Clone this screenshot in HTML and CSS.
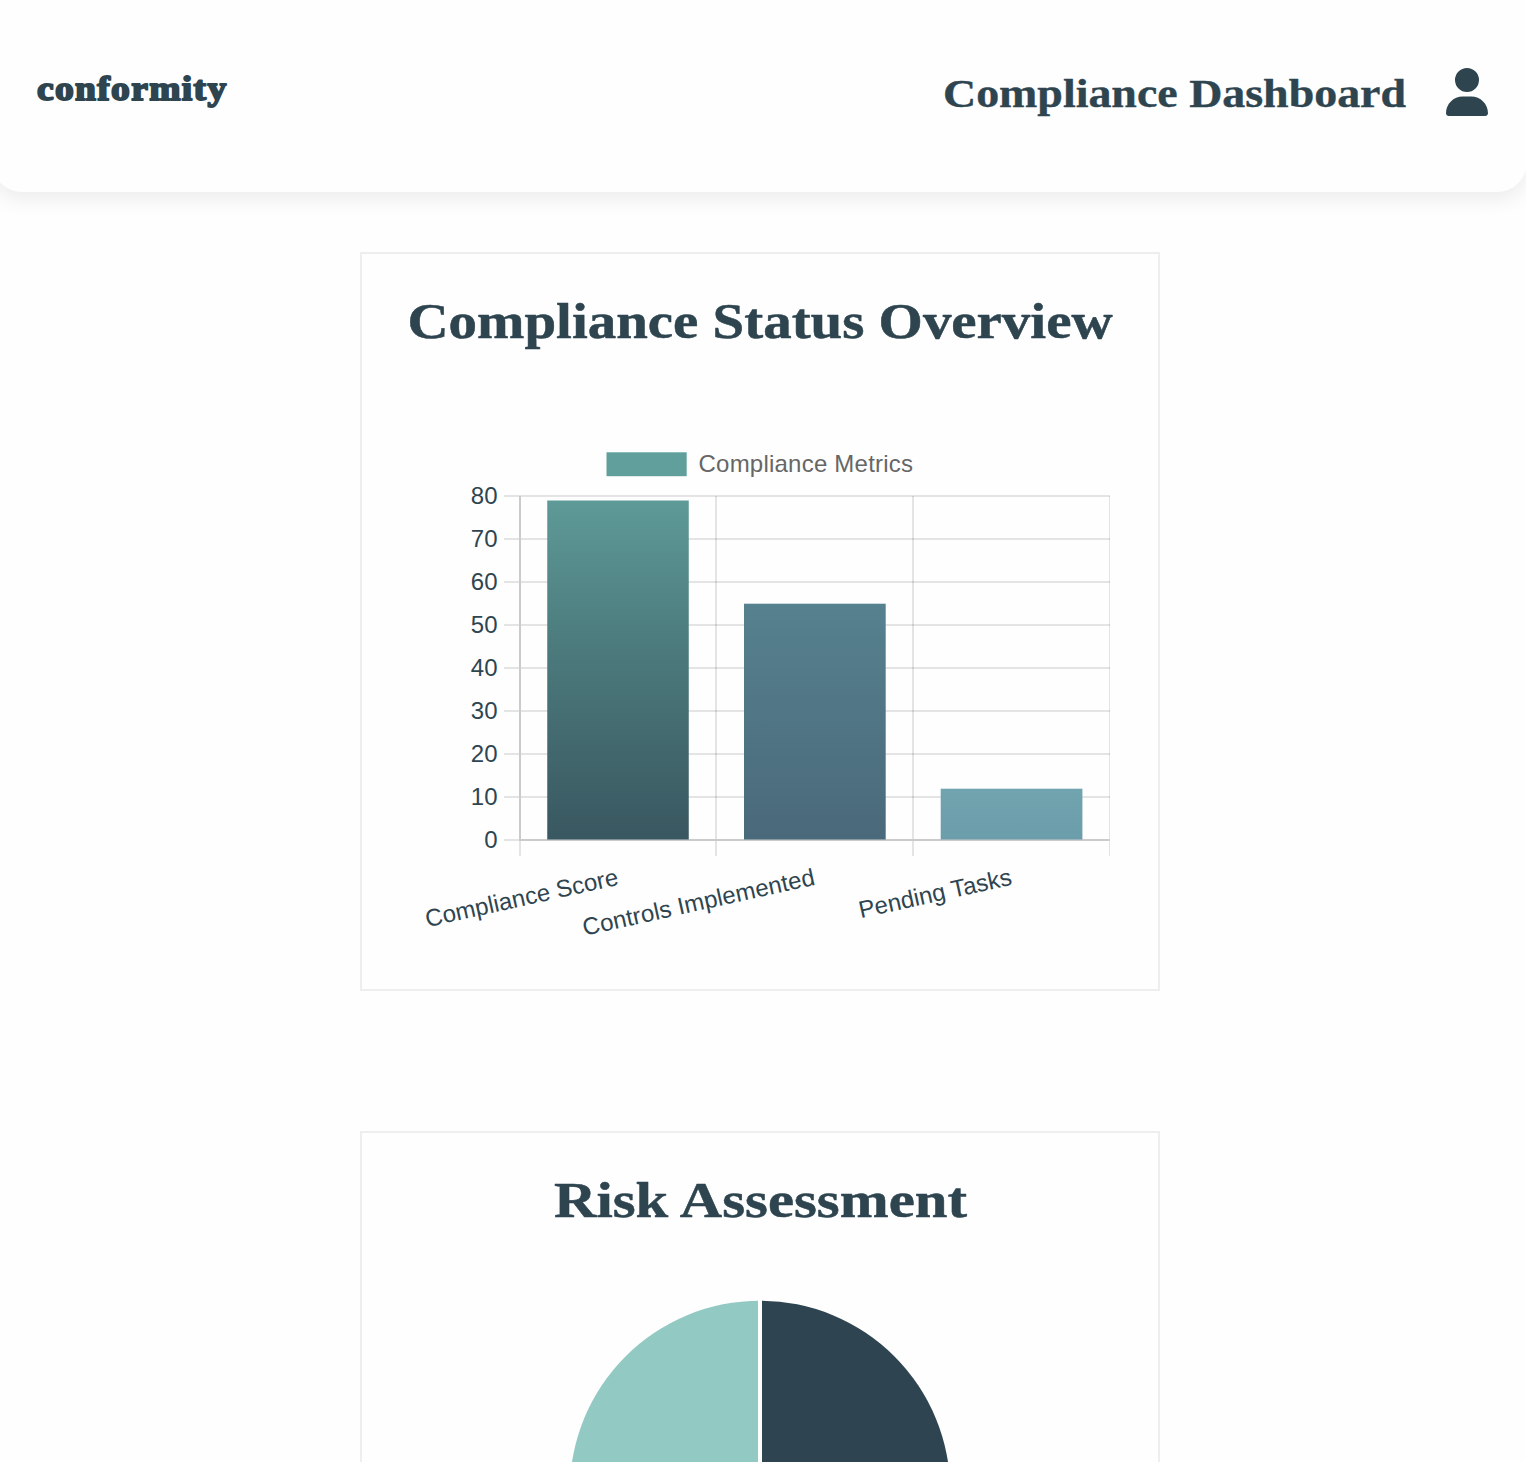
FILE: index.html
```html
<!DOCTYPE html>
<html lang="en">
<head>
<meta charset="utf-8">
<title>Compliance Dashboard</title>
<link rel="stylesheet" href="styles.css">
</head>
<body>
<header class="topbar">
  <svg class="logo" width="200" height="48" viewBox="0 0 200 48" role="img" aria-label="conformity">
    <text class="logo-text" transform="translate(2 32) scale(1.140 1)" textLength="166">conformity</text>
  </svg>
  <div class="topbar-right">
    <h1 class="page-title">
      <svg width="464" height="56" viewBox="0 0 464 56">
        <text class="title-text" x="0" y="42.500" textLength="463" lengthAdjust="spacingAndGlyphs">Compliance Dashboard</text>
      </svg>
    </h1>
    <svg class="user-icon" width="42" height="48" viewBox="0 0 448 512" aria-label="Account">
      <path d="M224 256A128 128 0 1 0 224 0a128 128 0 1 0 0 256zm-45.700 48C79.800 304 0 383.800 0 482.300C0 498.700 13.300 512 29.700 512H418.300c16.400 0 29.700-13.300 29.700-29.700C448 383.800 368.200 304 269.700 304H178.300z"/>
    </svg>
  </div>
</header>
<main class="content">
  <section class="card">
    <h2 class="card-title">
      <svg width="708" height="64" viewBox="0 0 708 64">
        <text class="heading-text" x="1.500" y="48" textLength="705" lengthAdjust="spacingAndGlyphs">Compliance Status Overview</text>
      </svg>
    </h2>
    <svg class="bar-chart" width="700" height="500" viewBox="410 440 700 500">
      <defs>
        <linearGradient id="score" x1="0" y1="0" x2="0" y2="1"><stop offset="0" stop-color="#5e9a97"/><stop offset=".4" stop-color="#4d7d7e"/><stop offset="1" stop-color="#395760"/></linearGradient>
        <linearGradient id="controls" x1="0" y1="0" x2="0" y2="1"><stop offset="0" stop-color="#56818f"/><stop offset="1" stop-color="#4a697a"/></linearGradient>
        <linearGradient id="pending" x1="0" y1="0" x2="0" y2="1"><stop offset="0" stop-color="#70a4ae"/><stop offset="1" stop-color="#6b9dab"/></linearGradient>
      </defs>
      <rect x="606.500" y="452.300" width="80.200" height="23.900" fill="#609f9b"/>
      <text class="legend" x="698.500" y="472" textLength="214.500">Compliance Metrics</text>
      <path class="grid" d="M504 496H1110M504 539H1110M504 582H1110M504 625H1110M504 668H1110M504 711H1110M504 754H1110M504 797H1110M504 840H520"/>
      <path class="grid" d="M716 496V856M913 496V856M1110 496V856M520 840V856"/>
      <path class="axis" d="M520 496V840M519 840H1110"/>
      <rect x="547.250" y="500.500" width="141.500" height="339" fill="url(#score)"/>
      <rect x="744" y="603.700" width="141.700" height="235.800" fill="url(#controls)"/>
      <rect x="940.700" y="788.700" width="141.700" height="50.800" fill="url(#pending)"/>
      <g class="tick tick-y">
        <text x="497.500" y="504">80</text><text x="497.500" y="547">70</text><text x="497.500" y="590">60</text><text x="497.500" y="633">50</text><text x="497.500" y="676">40</text><text x="497.500" y="719">30</text><text x="497.500" y="762">20</text><text x="497.500" y="805">10</text><text x="497.500" y="848">0</text>
      </g>
      <g class="tick tick-x">
        <text transform="translate(619.500 884.500) rotate(-12.500)" textLength="197">Compliance Score</text>
        <text transform="translate(816 884.500) rotate(-12.500)" textLength="237">Controls Implemented</text>
        <text transform="translate(1013 884.500) rotate(-12.500)" textLength="156">Pending Tasks</text>
      </g>
    </svg>
  </section>
  <section class="card">
    <h2 class="card-title">
      <svg width="708" height="64" viewBox="0 0 708 64">
        <text class="heading-text" x="148" y="48" textLength="413" lengthAdjust="spacingAndGlyphs">Risk Assessment</text>
      </svg>
    </h2>
    <svg class="pie-chart" width="400" height="400" viewBox="-200 -200 400 400">
      <path fill="#2e4450" d="M0 -190.300A190.300 190.300 0 0 1 0 190.300Z"/>
      <path fill="#92cac3" d="M0 -190.300A190.300 190.300 0 0 0 0 190.300Z"/>
      <path class="pie-divider" d="M0 -195V195"/>
    </svg>
  </section>
</main>
</body>
</html>
```
FILE: styles.css
```css
* { box-sizing: border-box; }

html { height: 100%; overflow: hidden; }

body {
  margin: 0;
  height: 100%;
  overflow: hidden;
  background: #fefefe;
  color: #2e4550;
  font-family: "Liberation Sans", Arial, sans-serif;
}

svg { display: block; overflow: visible; }

.topbar {
  display: flex;
  justify-content: space-between;
  align-items: center;
  height: 192px;
  margin: 0 -1px 0 -8px;
  padding: 0 39px 8px 43px;
  background: #fefefe;
  border-radius: 0 0 30px 30px;
  box-shadow: 0 8px 20px rgba(0, 0, 0, .07);
}

.topbar-right { display: flex; align-items: center; gap: 39px; }

.page-title, .card-title { margin: 0; }

.logo-text, .title-text, .heading-text {
  font-family: "Liberation Serif", Georgia, serif;
  font-weight: 700;
  fill: #2e4550;
  stroke: #2e4550;
  stroke-linejoin: round;
}

.logo-text {
  font-size: 33px;
  stroke-width: 1.8px;
}

.title-text { font-size: 40.5px; stroke-width: .4px; }
.heading-text { font-size: 50.5px; stroke-width: .5px; }
.user-icon { fill: #2e4550; }

.content {
  display: flex;
  flex-direction: column;
  align-items: center;
  gap: 140px;
  margin-right: 6px;
  padding-top: 60px;
}

.card {
  display: flex;
  flex: none;
  flex-direction: column;
  align-items: center;
  width: 800px;
  height: 739px;
  padding-top: 36px;
  border: 2px solid #eee;
}

.bar-chart { margin-top: 86px; }
.pie-chart { margin-top: 58px; }
.pie-divider { stroke: #fefefe; stroke-width: 4; }

.grid { fill: none; stroke: rgba(0, 0, 0, .1); stroke-width: 2; }
.axis { fill: none; stroke: #cbcbcb; stroke-width: 2; }
.bar-chart { overflow: hidden; }
.legend { font-size: 24px; fill: #666; }
.tick { font-size: 24px; fill: #2e4550; text-anchor: end; }
```
